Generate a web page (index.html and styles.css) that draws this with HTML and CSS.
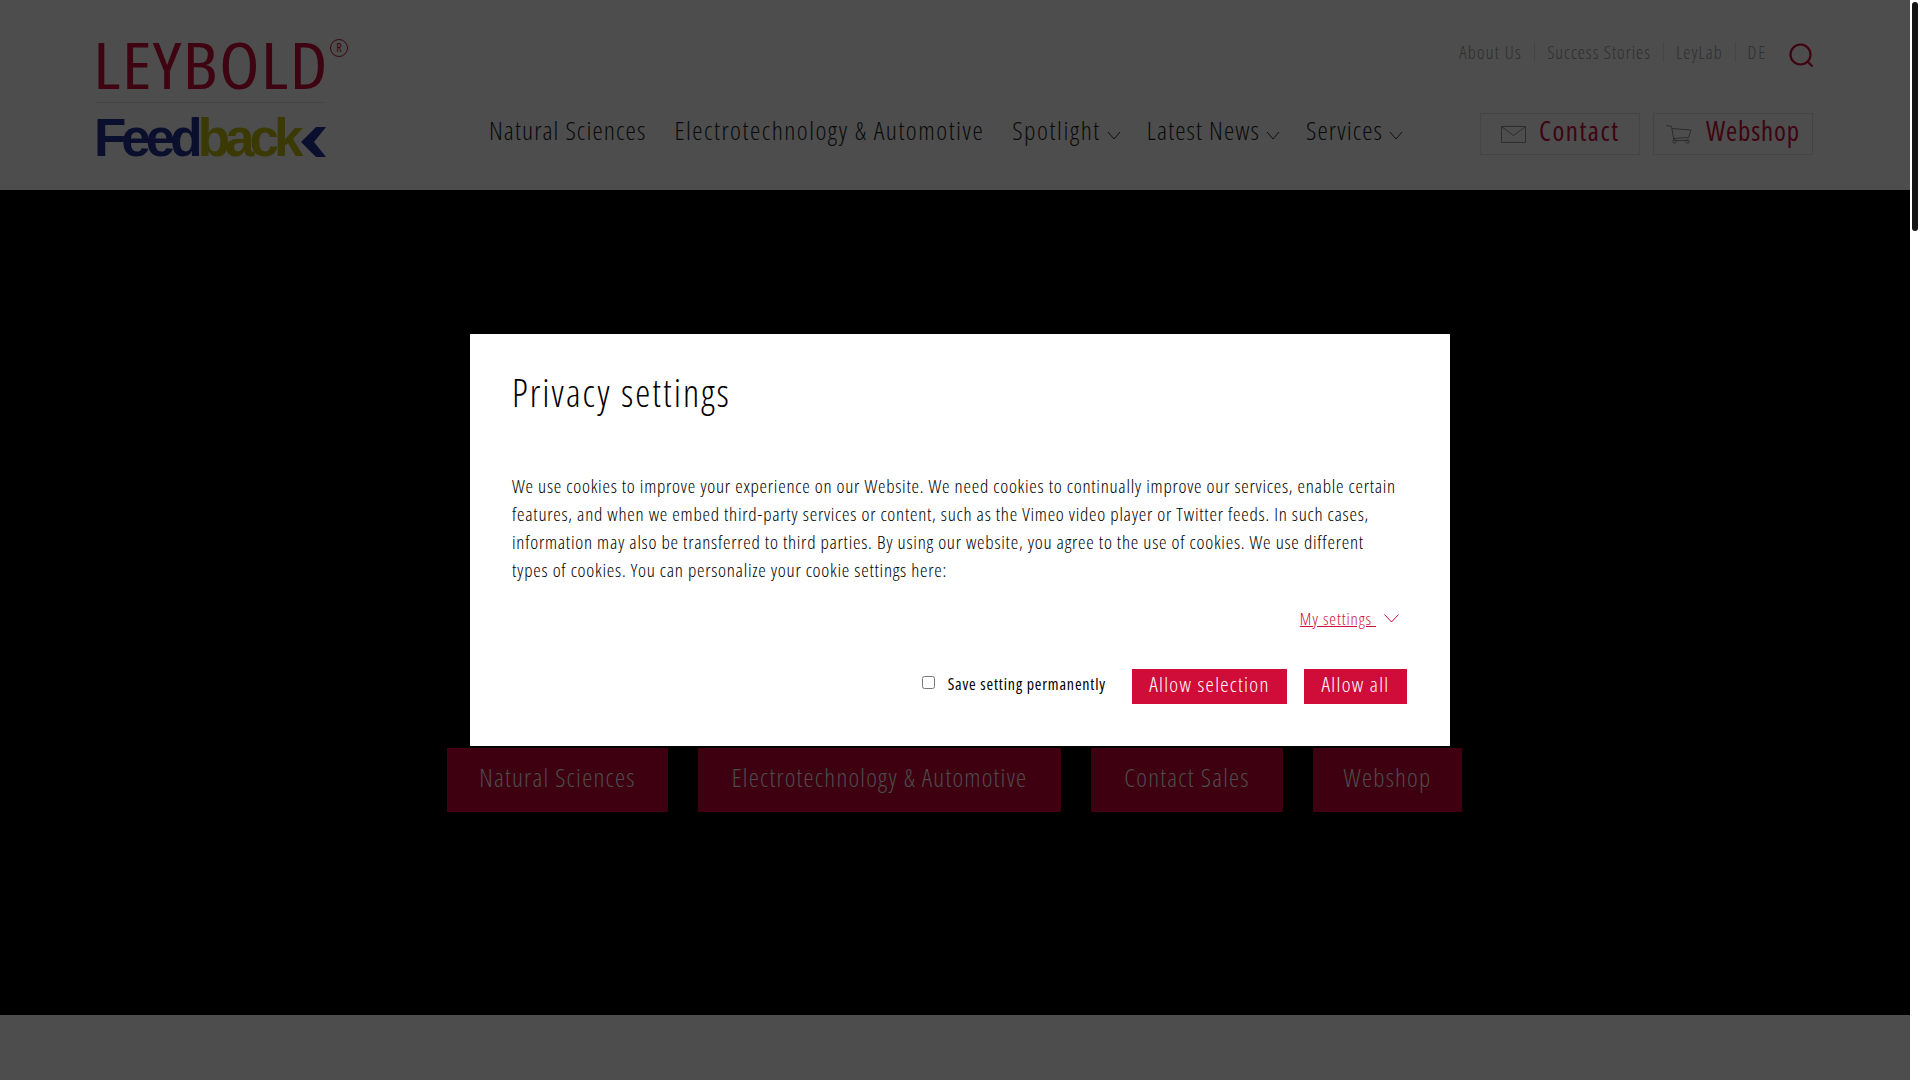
FILE: index.html
```html
<!DOCTYPE html>
<html lang="en">
<head>
<meta charset="utf-8">
<title>Leybold Feedback</title>
<link rel="stylesheet" href="styles.css">
</head>
<body>
<div class="page">
  <header class="site-header">
    <div class="logo">
      <div class="logo-leybold"><span class="logo-word">LEYBOLD</span><span class="logo-reg">R</span></div>
      <div class="logo-feedback"><span class="fb-navy">Feed</span><span class="fb-olive">back</span>
        <svg class="fb-chev" viewBox="0 0 25 30" width="25" height="30"><path d="M0 15L15 0h10L13 15l12 15H15z" fill="#0a0f2e"/></svg>
      </div>
    </div>
    <div class="header-right">
      <div class="top-row">
        <nav class="meta-nav">
          <a class="meta-link">About Us</a>
          <a class="meta-link">Success Stories</a>
          <a class="meta-link">LeyLab</a>
          <a class="meta-link">DE</a>
        </nav>
        <svg class="search-icon" viewBox="0 0 25 25" width="25" height="25" fill="none" stroke="#3e0411" stroke-width="2.2"><circle cx="11.5" cy="11.5" r="10"/><path d="M18.5 18.5l5 5"/></svg>
      </div>
      <div class="main-row">
        <nav class="main-nav">
          <a class="nav-item">Natural Sciences</a>
          <a class="nav-item nav-wide">Electrotechnology &amp; Automotive</a>
          <a class="nav-item nav-spot">Spotlight<svg class="chev" viewBox="0 0 14 9" width="14" height="9"><path d="M1 1l6 7 6-7" fill="none" stroke="#111" stroke-width="1"/></svg></a>
          <a class="nav-item">Latest News<svg class="chev" viewBox="0 0 14 9" width="14" height="9"><path d="M1 1l6 7 6-7" fill="none" stroke="#111" stroke-width="1"/></svg></a>
          <a class="nav-item">Services<svg class="chev" viewBox="0 0 14 9" width="14" height="9"><path d="M1 1l6 7 6-7" fill="none" stroke="#111" stroke-width="1"/></svg></a>
        </nav>
        <div class="cta-group">
          <a class="cta cta-contact">
            <svg viewBox="0 0 25 17" width="25" height="17" fill="none" stroke="#2d2d2d" stroke-width="1"><path d="M.5.5h24v16H.5zM.5.5l12 9 12-9"/></svg>
            <span>Contact</span>
          </a>
          <a class="cta cta-shop">
            <svg viewBox="0 0 26 20" width="26" height="20" fill="none" stroke="#2d2d2d" stroke-width="1"><path d="M.5 1.5l5 1 2.5 14h14M6 4.5l19 1.5-2.5 7.5-15 1"/><circle cx="8.5" cy="17.5" r="1.7"/><circle cx="21.5" cy="17.5" r="1.7"/></svg>
            <span>Webshop</span>
          </a>
        </div>
      </div>
    </div>
  </header>
  <main class="hero">
    <div class="hero-actions">
      <a class="hero-btn hb-1">Natural Sciences</a>
      <a class="hero-btn hb-2">Electrotechnology &amp; Automotive</a>
      <a class="hero-btn hb-3">Contact Sales</a>
      <a class="hero-btn hb-4">Webshop</a>
    </div>
  </main>
  <div class="page-rest"></div>
  <div class="modal">
    <h1 class="modal-title">Privacy settings</h1>
    <p class="modal-text">We use cookies to improve your experience on our Website. We need cookies to continually improve our services, enable certain<br>features, and when we embed third-party services or content, such as the Vimeo video player or Twitter feeds. In such cases,<br>information may also be transferred to third parties. By using our website, you agree to the use of cookies. We use different<br>types of cookies. You can personalize your cookie settings here:</p>
    <div class="settings-row">
      <a class="settings-link">My settings&nbsp;</a>
      <svg viewBox="0 0 15 9" width="15" height="9"><path d="M.5.5l7 7.5 7-7.5" fill="none" stroke="#d00c38" stroke-width="1"/></svg>
    </div>
    <div class="modal-actions">
      <label class="save-label"><input type="checkbox" class="save-box"><span class="save-text">Save setting permanently</span></label>
      <a class="modal-btn btn-selection">Allow selection</a>
      <a class="modal-btn btn-all">Allow all</a>
    </div>
  </div>
</div>
<aside class="scrollbar"><div class="scroll-thumb"></div></aside>
</body>
</html>
```
FILE: styles.css
```css
* { box-sizing: border-box; }
html, body { margin: 0; height: 100%; overflow: hidden; background: #fff; }
body { display: flex; font-family: "Open Sans", sans-serif; font-stretch: 75%; font-weight: 350; color: #000; }
a { text-decoration: none; }

.page { position: relative; flex: 1; height: 1080px; display: flex; flex-direction: column; background: #4d4d4d; }
.scrollbar { width: 10px; height: 1080px; padding: 2px; background: #fff; }
.scroll-thumb { width: 6px; height: 229px; border-radius: 3px; background: #141414; }

.site-header { height: 190px; padding: 42px 97px 0 96px; display: flex; background: #4d4d4d; }

.logo { flex: none; width: 298px; }
.logo-leybold { position: relative; width: 229px; height: 61px; border-bottom: 1px solid #444; color: #3e0411; font-size: 63px; font-weight: 400; line-height: 46px; letter-spacing: 1px; white-space: nowrap; }
.logo-word { display: inline-block; margin-left: -3px; transform: scaleX(1.185); transform-origin: left center; }
.logo-reg { position: absolute; left: 234px; top: -3px; width: 18px; height: 18px; border: 1.5px solid #3e0411; border-radius: 50%; font-size: 12px; line-height: 15px; letter-spacing: 0; text-align: center; }
.logo-feedback { display: flex; align-items: flex-end; height: 39px; margin: 15px 0 0 -2px; width: 231px; font-family: "Liberation Sans", sans-serif; font-stretch: normal; font-weight: 700; font-size: 53px; line-height: 39px; letter-spacing: -5px; }
.fb-navy { color: #0a0f2e; }
.fb-olive { color: #3b3a04; }
.fb-chev { flex: none; margin-left: 2px; }

.header-right { flex: 1; display: flex; flex-direction: column; min-width: 0; }
.top-row { height: 71px; display: flex; justify-content: flex-end; align-items: flex-start; }
.meta-nav { display: flex; margin-right: 22px; }
.meta-link { padding: 0 12px; color: #2d2d2d; font-size: 18px; line-height: 20px; border-left: 1px solid #444; letter-spacing: 1px; white-space: nowrap; }
.meta-link:first-child { border-left: 0; letter-spacing: 1.3px; }
.meta-link:last-child { padding-right: 0; letter-spacing: 1.8px; }
.search-icon { flex: none; margin: 1px -1px 0 0; }

.main-row { display: flex; justify-content: space-between; align-items: flex-start; padding-left: 95px; }
.main-nav { display: flex; gap: 28px; padding-top: 2px; }
.nav-item { display: flex; align-items: flex-end; color: #0a0a0a; font-size: 26px; line-height: 30px; letter-spacing: 1.1px; white-space: nowrap; }
.nav-wide { letter-spacing: 1.5px; }
.nav-spot { letter-spacing: 1.6px; }
.chev { flex: none; margin: 0 -2px 5px 6px; }

.cta-group { display: flex; gap: 13px; }
.cta { display: flex; align-items: center; width: 160px; height: 42px; border: 1px solid #444; color: #3e0411; font-size: 27px; font-weight: 400; }
.cta-contact { padding-left: 20px; gap: 13px; }
.cta-shop { padding-left: 12px; gap: 14px; }
.cta span { margin-top: -7px; letter-spacing: .8px; }
.cta-contact span { letter-spacing: 1.5px; }

.hero { height: 825px; padding-top: 558px; display: flex; background: #000; }
.hero-actions { display: flex; gap: 30px; padding-left: 447px; }
.hero-btn { height: 64px; background: #3e0011; color: #4d4d4d; font-size: 25.5px; line-height: 58px; letter-spacing: 1.2px; text-align: center; white-space: nowrap; }
.hb-1 { width: 221px; }
.hb-2 { width: 363px; }
.hb-3 { width: 192px; }
.hb-4 { width: 149px; }
.page-rest { flex: 1; }

.modal { position: absolute; left: 470px; top: 334px; width: 980px; height: 412px; padding: 35px 43px 0 42px; background: #fff; display: flex; flex-direction: column; }
.modal-title { margin: 0; color: #000; font-size: 38px; font-weight: 350; line-height: 46px; letter-spacing: 2.05px; }
.modal-text { margin: 57px 0 0; color: #000; font-size: 19px; line-height: 28px; letter-spacing: .74px; white-space: nowrap; }
.settings-row { display: flex; justify-content: flex-end; align-items: center; gap: 8px; margin-top: 22px; padding-right: 8px; height: 24px; }
.settings-link { color: #d00c38; font-size: 17px; letter-spacing: .9px; text-decoration: underline; }
.modal-actions { display: flex; justify-content: flex-end; align-items: flex-start; margin-top: 39px; }
.save-label { display: flex; align-items: center; gap: 13px; margin: -1px 26px 0 0; height: 28px; font-size: 16px; font-weight: 400; letter-spacing: .82px; color: #000; }
.save-text { margin-top: 3px; }
.save-box { margin: 0; width: 13px; height: 13px; }
.modal-btn { height: 35px; background: #d00c38; color: #fff; font-size: 21px; line-height: 30px; letter-spacing: 1.3px; text-align: center; }
.btn-selection { width: 155px; margin-right: 17px; }
.btn-all { width: 103px; }
```
